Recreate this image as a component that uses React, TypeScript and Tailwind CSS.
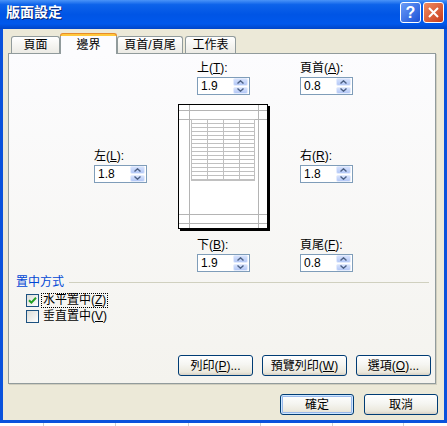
import React from "react";

const font = "font-['Liberation_Sans','Noto_Sans_CJK_TC',sans-serif]";

// label with an underlined access key, e.g. 上(T):
function Label({ text, k, colon = true, h = "h-[16px] leading-[16px]" }: { text: string; k: string; colon?: boolean; h?: string }) {
  return (
    <div className={`${h} whitespace-nowrap text-[12px]`}>
      {text}(<span className="underline">{k}</span>){colon ? ":" : ""}
    </div>
  );
}

function Spinner() {
  return (
    <div className="flex flex-col w-[15px] h-[16px] gap-px">
      {[0, 1].map((i) => (
        <div
          key={i}
          className="flex-1 rounded-[2px] border border-[#e4ecfd] bg-linear-to-b from-[#d5e1fc] to-[#b4c8f6] flex items-center justify-center"
        >
          <svg width="7" height="4" viewBox="0 0 7 4">
            <path
              d={i === 0 ? "M0.5 3.5 L3.5 0.8 L6.5 3.5" : "M0.5 0.5 L3.5 3.2 L6.5 0.5"}
              fill="none"
              stroke="#4d6185"
              strokeWidth="1.4"
            />
          </svg>
        </div>
      ))}
    </div>
  );
}

function SpinField({ value }: { value: string }) {
  return (
    <div className="w-[53px] h-[18px] mt-px border border-[#7f9db9] bg-white flex items-center justify-between pl-[3px] pr-px">
      <span className="text-[12px] leading-none">{value}</span>
      <Spinner />
    </div>
  );
}

// page thumbnail with margin guides and a small sheet grid
function PagePreview() {
  const rows = Array.from({ length: 16 }, (_, i) => 15.5 + i * 4);
  const cols = [13.5, 29.5, 45.5, 61.5, 76.5];
  return (
    <svg width="92" height="127" viewBox="0 0 92 127" className="mt-[9px]">
      <rect x="90" y="2" width="2" height="125" fill="#000" />
      <rect x="2" y="125" width="90" height="2" fill="#000" />
      <rect x="0.5" y="0.5" width="89" height="124" fill="#fff" stroke="#000" />
      <g stroke="#b4b4b4" strokeWidth="1">
        <line x1="11.5" y1="1" x2="11.5" y2="124" />
        <line x1="80.5" y1="1" x2="80.5" y2="124" />
        <line x1="1" y1="6.5" x2="89" y2="6.5" />
        <line x1="1" y1="15.5" x2="89" y2="15.5" />
        <line x1="1" y1="110.5" x2="89" y2="110.5" />
        <line x1="1" y1="119.5" x2="89" y2="119.5" />
      </g>
      <g stroke="#c0c0c0" strokeWidth="1">
        {rows.map((y) => (
          <line key={y} x1="13" y1={y} x2="77" y2={y} />
        ))}
        <line x1="13" y1="76.5" x2="77" y2="76.5" />
        {cols.map((x) => (
          <line key={x} x1={x} y1="15" x2={x} y2="77" />
        ))}
      </g>
    </svg>
  );
}

function Button({ children, w, primary }: { children: React.ReactNode; w: string; primary?: boolean }) {
  return (
    <div
      className={`${w} h-[21px] rounded-[3px] border border-[#003c74] bg-[linear-gradient(180deg,#ffffff_0%,#f5f5f1_45%,#ebe8dc_85%,#d6d0c5_100%)] flex items-center justify-center text-[12px] whitespace-nowrap ${
        primary ? "shadow-[inset_0_0_0_1px_#cee7ff,inset_0_0_0_2px_#98b8ea]" : ""
      }`}
    >
      {children}
    </div>
  );
}

function Checkbox({ checked }: { checked?: boolean }) {
  return (
    <div className="w-[13px] h-[13px] shrink-0 border border-[#1c5180] bg-linear-to-br from-[#dcdcd7] to-white flex items-center justify-center">
      {checked && (
        <svg width="9" height="9" viewBox="0 0 9 9">
          <path d="M1 4.2 L3.4 6.6 L8 1.8" fill="none" stroke="#21a121" strokeWidth="2" />
        </svg>
      )}
    </div>
  );
}

function Tab({ label, w, active, ml }: { label: string; w: string; active?: boolean; ml?: string }) {
  if (active) {
    return (
      <div className={`${w} h-[21px] -mb-px relative z-10 flex flex-col ${ml ?? ""}`}>
        <div className="h-[3px] rounded-t-[3px] border-t border-x border-[#e68b2c] bg-[#ffc83c]" />
        <div className="flex-1 bg-[#fcfcfe] border-x border-[#919b9c] flex items-center justify-center text-[12px]">
          {label}
        </div>
      </div>
    );
  }
  return (
    <div
      className={`${w} h-[17px] rounded-t-[3px] border border-b-0 border-[#919b9c] bg-linear-to-b from-white to-[#ecebe5] flex items-center justify-center text-[12px] ${ml ?? ""}`}
    >
      {label}
    </div>
  );
}

export default function App() {
  return (
    <div className={`w-[447px] h-[426px] flex flex-col bg-white text-black ${font}`}>
      <div className="h-[423px] flex flex-col bg-[#0a52dc]">
        {/* title bar */}
        <div className="h-[29px] flex items-start justify-between pl-[6px] pr-[3px] pt-[2px] bg-[linear-gradient(180deg,#4a94f8_0%,#0d63ea_16%,#0055e5_50%,#0058ec_82%,#0045c9_100%)]">
          <div className="h-[21px] flex items-center text-[14px] font-bold text-white [text-shadow:1px_1px_0_#0a2a7a]">
            版面設定
          </div>
          <div className="flex gap-[2px]">
            <div className="w-[21px] h-[21px] rounded-[3px] border border-white bg-linear-to-br from-[#6b9cf7] to-[#1c4fd6] flex items-center justify-center text-white text-[16px] font-bold leading-none">
              ?
            </div>
            <div className="w-[21px] h-[21px] rounded-[3px] border border-white bg-linear-to-br from-[#ef8a60] to-[#c7391a] flex items-center justify-center">
              <svg width="11" height="11" viewBox="0 0 11 11">
                <path d="M1 1 L10 10 M10 1 L1 10" stroke="#fff" strokeWidth="2" />
              </svg>
            </div>
          </div>
        </div>

        <div className="mx-[3px] mb-[3px] flex-1 bg-[#ece9d8] flex flex-col">
          {/* tabs */}
          <div className="h-[24px] flex items-end pl-[8px]">
            <Tab label="頁面" w="w-[49px]" />
            <Tab label="邊界" w="w-[57px]" active />
            <Tab label="頁首/頁尾" w="w-[66px]" />
            <Tab label="工作表" w="w-[51px]" ml="ml-[2px]" />
          </div>

          {/* tab page */}
          <div className="ml-[5px] w-[428px] h-[331px] border border-[#919b9c] shadow-[1px_1px_0_#d0cebf] bg-linear-to-b from-[#fcfcfe] to-[#f4f3ee] flex flex-col">
            <div className="h-[218px] flex pl-[85px]">
              <div className="w-[53px] pt-[94px]">
                <Label text="左" k="L" />
                <SpinField value="1.8" />
              </div>
              <div className="w-[92px] ml-[31px] pt-[6px] flex flex-col">
                <div className="ml-[19px]">
                  <Label text="上" k="T" />
                  <SpinField value="1.9" />
                </div>
                <PagePreview />
                <div className="ml-[19px] mt-[6px]">
                  <Label text="下" k="B" />
                  <SpinField value="1.9" />
                </div>
              </div>
              <div className="w-[53px] ml-[30px] pt-[6px]">
                <Label text="頁首" k="A" />
                <SpinField value="0.8" />
                <div className="mt-[53px]">
                  <Label text="右" k="R" />
                  <SpinField value="1.8" />
                </div>
                <div className="mt-[54px]">
                  <Label text="頁尾" k="F" />
                  <SpinField value="0.8" />
                </div>
              </div>
            </div>

            {/* centering group */}
            <div className="mt-[2px] h-[16px] flex items-center pl-[7px] pr-[6px]">
              <span className="text-[12px] text-[#0046d5]">置中方式</span>
              <div className="flex-1 h-px ml-[5px] bg-[#d0d0bf]" />
            </div>
            <div className="mt-[2px] h-[16px] flex items-center pl-[17px]">
              <Checkbox checked />
              <div className="ml-[2px] px-px border border-dotted border-black">
                <Label text="水平置中" k="Z" colon={false} h="h-[13px] leading-[13px]" />
              </div>
            </div>
            <div className="h-[16px] flex items-center pl-[17px]">
              <Checkbox />
              <div className="ml-[2px] px-px border border-transparent">
                <Label text="垂直置中" k="V" colon={false} h="h-[13px] leading-[13px]" />
              </div>
            </div>

            <div className="flex-1" />
            <div className="mb-[7px] mr-[4px] flex justify-end gap-[9px]">
              <Button w="w-[75px]">
                列印(<span className="underline">P</span>)...
              </Button>
              <Button w="w-[85px]">
                預覽列印(<span className="underline">W</span>)
              </Button>
              <Button w="w-[75px]">
                選項(<span className="underline">O</span>)...
              </Button>
            </div>
          </div>

          <div className="mt-[10px] mr-[6px] flex justify-end gap-[10px]">
            <Button w="w-[74px]" primary>
              確定
            </Button>
            <Button w="w-[74px]">取消</Button>
          </div>
        </div>
      </div>

      {/* sheet gridlines peeking out under the dialog */}
      <div className="h-[3px] flex">
        <div className="w-[44px] border-r border-[#d0d0d0]" />
        <div className="w-[72px] border-r border-[#d0d0d0]" />
        <div className="w-[73px] border-r border-[#d0d0d0]" />
        <div className="w-[72px] border-r border-[#d0d0d0]" />
        <div className="w-[72px] border-r border-[#d0d0d0]" />
        <div className="w-[71px] border-r border-[#d0d0d0]" />
      </div>
    </div>
  );
}
